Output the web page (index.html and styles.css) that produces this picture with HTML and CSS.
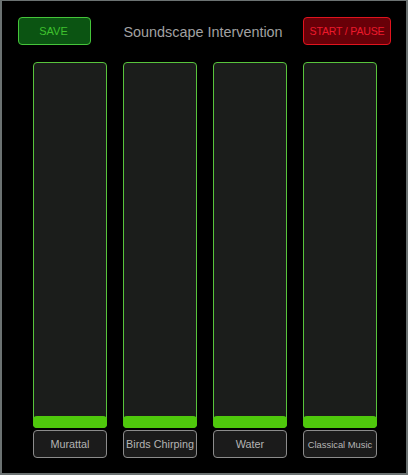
FILE: index.html
```html
<!DOCTYPE html>
<html>
<head>
<meta charset="utf-8">
<link rel="stylesheet" href="styles.css">
</head>
<body>
<div class="frame">
  <div class="header">
    <button class="btn save">SAVE</button>
    <div class="title">Soundscape Intervention</div>
    <button class="btn start">START / PAUSE</button>
  </div>
  <div class="channels">
    <div class="channel">
      <div class="slider"><div class="fill"></div></div>
      <div class="label">Murattal</div>
    </div>
    <div class="channel">
      <div class="slider"><div class="fill"></div></div>
      <div class="label">Birds Chirping</div>
    </div>
    <div class="channel">
      <div class="slider"><div class="fill"></div></div>
      <div class="label">Water</div>
    </div>
    <div class="channel">
      <div class="slider"><div class="fill"></div></div>
      <div class="label small">Classical Music</div>
    </div>
  </div>
</div>
</body>
</html>
```

FILE: styles.css
```css
* { box-sizing: border-box; }
html, body { margin: 0; padding: 0; background: #000; }
body { font-family: "Liberation Sans", Arial, sans-serif; }

.frame {
  width: 408px;
  height: 475px;
  background: #000;
  border-style: solid;
  border-color: #6b7272;
  border-width: 1px 2px 2px 2px;
  padding: 16px 15px 0 16px;
}

.header {
  display: flex;
  align-items: center;
  height: 28px;
}

.btn {
  height: 28px;
  border-radius: 4px;
  border: 1px solid;
  font-family: "Liberation Sans", Arial, sans-serif;
  padding: 0;
  display: flex;
  align-items: center;
  justify-content: center;
}

.save {
  width: 73px;
  background: #0b5412;
  border-color: #45c43a;
  color: #3fc22e;
  font-size: 11px;
  padding-right: 2px;
}

.start {
  width: 88px;
  background: #680008;
  border-color: #e0141e;
  color: #ec1a2c;
  font-size: 10.6px;
  letter-spacing: -0.2px;
}

.title {
  flex: 1;
  text-align: center;
  color: #a2a2a2;
  font-size: 14.4px;
  padding-left: 12px;
  padding-top: 1px;
}

.channels {
  display: flex;
  gap: 16px;
  margin-top: 17px;
  padding-left: 15px;
}

.channel {
  width: 74px;
  display: flex;
  flex-direction: column;
  gap: 2px;
}

.slider {
  height: 366px;
  border: 1px solid #58c43c;
  border-radius: 4px;
  background: #1b1d1b;
  display: flex;
  flex-direction: column;
  justify-content: flex-end;
}

.fill {
  height: 12px;
  margin: 0 -1px -1px -1px;
  background: #4fc80c;
  border-radius: 4px;
}

.label {
  height: 28px;
  border: 1px solid #8c8c8c;
  border-radius: 4px;
  background: #1b1b1b;
  color: #b4b4b4;
  font-size: 10.8px;
  display: flex;
  align-items: center;
  justify-content: center;
  white-space: nowrap;
  padding-bottom: 1px;
}

.label.small { font-size: 9.4px; padding-bottom: 0; }
```
